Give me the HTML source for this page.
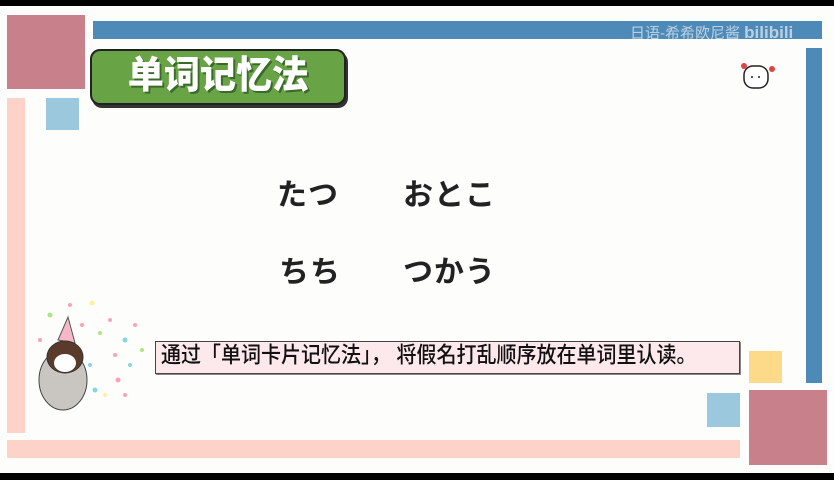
<!DOCTYPE html>
<html><head><meta charset="utf-8"><style>
*{margin:0;padding:0;box-sizing:border-box}
body{width:834px;height:480px;overflow:hidden;background:#000;position:relative;font-family:"Liberation Sans","Noto Sans CJK JP",sans-serif}
.a{position:absolute}
.kana{position:absolute;font-size:30px;color:#222;font-weight:700;letter-spacing:1px}
</style></head><body>
<div class="a" style="left:0;top:6px;width:834px;height:467px;background:#fdfdfb"></div>
<div class="a" style="left:7px;top:15px;width:78px;height:74px;background:#c8808a"></div>
<div class="a" style="left:93px;top:21px;width:729px;height:18px;background:#4e8ab8"></div>
<div class="a" style="left:630px;top:22px;color:#e8eef5;font-size:15px;opacity:.7">日语-希希欧尼酱 <b style="font-size:17px">bilibili</b></div>
<div class="a" style="left:806px;top:48px;width:16px;height:335px;background:#4e8ab8"></div>
<div class="a" style="left:46px;top:98px;width:33px;height:32px;background:#9cc8de"></div>
<div class="a" style="left:7px;top:98px;width:18px;height:335px;background:#fdd2c8"></div>
<div class="a" style="left:7px;top:440px;width:733px;height:18px;background:#fdd2c8"></div>
<div class="a" style="left:749px;top:351px;width:33px;height:32px;background:#fdd98a"></div>
<div class="a" style="left:707px;top:393px;width:33px;height:34px;background:#9cc8de"></div>
<div class="a" style="left:749px;top:390px;width:78px;height:75px;background:#c8808a"></div>
<div class="a" style="left:90px;top:49px;width:256px;height:56px;background:#68a345;border:2px solid #222;border-radius:10px;box-shadow:2px 3px 0 #333"></div>
<div class="a" style="left:90px;top:49px;width:256px;height:56px;line-height:54px;text-align:center;color:#fff;font-size:38px;font-weight:900;letter-spacing:0;text-shadow:2px 2px 0 #3a6a2a;transform:scaleX(.95)">单词记忆法</div>
<div class="kana" style="left:277px;top:170px">たつ</div>
<div class="kana" style="left:403px;top:170px">おとこ</div>
<div class="kana" style="left:279px;top:247px">ちち</div>
<div class="kana" style="left:403px;top:247px">つかう</div>
<div class="a" style="left:155px;top:341px;width:585px;height:33px;background:#fde9ec;border:1px solid #444;box-shadow:1px 1px 0 #888"></div>
<div class="a" style="left:161px;top:341px;height:33px;font-size:20px;line-height:31px;color:#111;font-weight:500;transform:scaleY(1.12);transform-origin:left center">通过「单词卡片记忆法」，&nbsp;将假名打乱顺序放在单词里认读。</div>
<svg class="a" style="left:30px;top:295px" width="125" height="125">
<g fill-opacity=".8">
<circle cx="20" cy="20" r="2.5" fill="#9d6"/><circle cx="40" cy="10" r="2" fill="#f8a"/><circle cx="62" cy="8" r="2.5" fill="#fe8"/><circle cx="80" cy="25" r="2" fill="#f8a"/><circle cx="95" cy="45" r="2.5" fill="#6cd"/><circle cx="85" cy="60" r="2" fill="#f8a"/><circle cx="70" cy="38" r="2" fill="#9d6"/><circle cx="100" cy="70" r="2" fill="#6cd"/><circle cx="88" cy="85" r="2.5" fill="#f8a"/><circle cx="75" cy="100" r="2" fill="#fe8"/><circle cx="60" cy="70" r="2" fill="#6cd"/><circle cx="52" cy="30" r="2" fill="#f8a"/><circle cx="10" cy="45" r="2" fill="#f8a"/><circle cx="105" cy="30" r="2" fill="#f8a"/><circle cx="65" cy="95" r="2.5" fill="#6cd"/><circle cx="112" cy="55" r="2" fill="#9d6"/><circle cx="95" cy="100" r="2" fill="#f8a"/>
</g>
<path d="M28 45 L38 22 L45 48Z" fill="#f6b8c8" stroke="#555"/>
<ellipse cx="33" cy="85" rx="24" ry="30" fill="#c9c6c2" stroke="#444"/>
<ellipse cx="35" cy="62" rx="18" ry="16" fill="#5a3a2a" stroke="#333"/>
<ellipse cx="35" cy="68" rx="11" ry="9" fill="#fff"/>
</svg>
<svg class="a" style="left:738px;top:60px" width="40" height="35">
<circle cx="6" cy="6" r="3" fill="#d44"/><circle cx="34" cy="9" r="3" fill="#d44"/>
<rect x="6" y="6" width="24" height="22" rx="9" fill="#fff" stroke="#222" stroke-width="1.5"/>
<circle cx="14" cy="17" r="1" fill="#222"/><circle cx="21" cy="17" r="1" fill="#222"/>
</svg>
<div class="a" style="left:0;top:473px;width:834px;height:7px;background:#000"></div>
</body></html>
